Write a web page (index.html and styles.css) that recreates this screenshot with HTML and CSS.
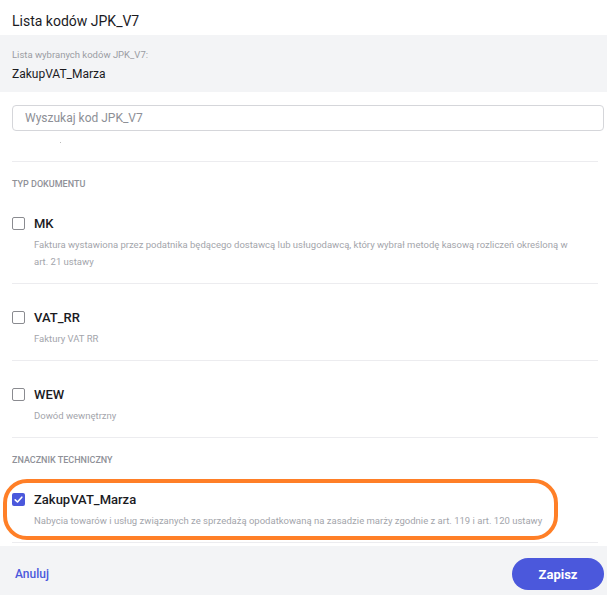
FILE: index.html
```html
<!DOCTYPE html>
<html lang="pl">

<head>
    <meta charset="UTF-8">
    <meta name="viewport" content="width=device-width, initial-scale=1.0">
    <title>Lista kodów JPK_V7</title>
    <link rel="stylesheet" href="styles.css">
</head>

<body>
    <div class="dialog">
        <div class="dialog-header">Lista kodów JPK_V7</div>

        <div class="selected">
            <div class="selected-label">Lista wybranych kodów JPK_V7:</div>
            <div class="selected-value">ZakupVAT_Marza</div>
        </div>

        <div class="content">
            <input class="search" type="text" placeholder="Wyszukaj kod JPK_V7">
            <div class="spacer"><span class="dot"></span></div>

            <div class="group">
                <div class="group-title">Typ dokumentu</div>

                <div class="item">
                    <div class="item-head">
                        <span class="checkbox"></span>
                        <span class="item-title">MK</span>
                    </div>
                    <p class="item-desc">Faktura wystawiona przez podatnika będącego dostawcą lub usługodawcą, który wybrał metodę kasową rozliczeń określoną w art. 21 ustawy</p>
                </div>

                <div class="item">
                    <div class="item-head">
                        <span class="checkbox"></span>
                        <span class="item-title">VAT_RR</span>
                    </div>
                    <p class="item-desc">Faktury VAT RR</p>
                </div>

                <div class="item">
                    <div class="item-head">
                        <span class="checkbox"></span>
                        <span class="item-title">WEW</span>
                    </div>
                    <p class="item-desc">Dowód wewnętrzny</p>
                </div>
            </div>

            <div class="group">
                <div class="group-title">Znacznik techniczny</div>

                <div class="item item-marked">
                    <div class="item-head">
                        <span class="checkbox checked">
                            <svg width="13" height="13" viewBox="0 0 13 13">
                                <path d="M3.2 6.8 L5.5 9 L9.8 4.2" fill="none" stroke="#fff" stroke-width="1.6" stroke-linecap="round" stroke-linejoin="round"/>
                            </svg>
                        </span>
                        <span class="item-title">ZakupVAT_Marza</span>
                    </div>
                    <p class="item-desc">Nabycia towarów i usług związanych ze sprzedażą opodatkowaną na zasadzie marży zgodnie z art. 119 i art. 120 ustawy</p>
                    <div class="highlight"></div>
                </div>
            </div>
        </div>

        <div class="dialog-footer">
            <a class="cancel" href="#">Anuluj</a>
            <button class="save">Zapisz</button>
        </div>
    </div>
</body>

</html>
```

FILE: styles.css
```css
body {
    margin: 0;
    font-family: 'Roboto', 'Liberation Sans', sans-serif;
    background: #fff;
    color: #1b1b1f;
}

.dialog {
    width: 607px;
}

.dialog-header {
    height: 35px;
    padding: 0 12px;
    font-size: 14px;
    line-height: 43px;
    box-sizing: border-box;
}

.selected {
    background: #f3f4f6;
    height: 57px;
    padding: 13px 12px 0;
    box-sizing: border-box;
}

.selected-label {
    font-size: 9.5px;
    line-height: 14px;
    color: #9a9ca3;
}

.selected-value {
    margin-top: 4px;
    font-size: 12px;
    line-height: 16px;
}

.content {
    padding: 13px 3px 0 12px;
}

.search {
    display: block;
    width: 100%;
    height: 26px;
    box-sizing: border-box;
    border: 1px solid #d5d6da;
    border-radius: 4px;
    padding: 0 12px;
    font-family: inherit;
    font-size: 12px;
    outline: none;
}

.search::placeholder {
    color: #8d8f96;
}

.spacer {
    height: 30px;
    position: relative;
    margin-right: 6px;
    border-bottom: 1px solid #ececef;
}

.dot {
    position: absolute;
    left: 48px;
    top: 11px;
    width: 1px;
    height: 1px;
    background: #bbb;
}

.group {
    margin-right: 6px;
}

.group-title {
    padding-top: 16px;
    font-size: 9px;
    line-height: 12px;
    font-weight: 500;
    text-transform: uppercase;
    color: #8f9198;
}

.item {
    padding: 24px 0 13px;
    border-bottom: 1px solid #ececef;
    position: relative;
}

.item-head {
    display: flex;
    align-items: center;
    gap: 9px;
    height: 18px;
}

.checkbox {
    width: 13px;
    height: 13px;
    box-sizing: border-box;
    border: 1.5px solid #8a8b90;
    border-radius: 2px;
    display: flex;
    align-items: center;
    justify-content: center;
}

.checkbox.checked {
    border: none;
    background: #4b58dc;
}

.item-title {
    font-size: 13px;
    font-weight: 500;
}

.item-desc {
    margin: 4px 22px 0 22px;
    font-size: 9.5px;
    line-height: 17px;
    color: #a3a5ab;
}

.highlight {
    position: absolute;
    left: -9px;
    top: 13px;
    width: 555px;
    height: 61px;
    box-sizing: border-box;
    border: 4px solid #ff7f27;
    border-radius: 24px;
}

.dialog-footer {
    margin-top: 3px;
    background: #f3f4f6;
    padding: 12px 3px 12px 15px;
    display: flex;
    justify-content: space-between;
    align-items: center;
}

.cancel {
    color: #4b58dc;
    font-size: 12px;
    font-weight: 500;
    text-decoration: none;
}

.save {
    width: 92px;
    height: 32px;
    border: none;
    border-radius: 16px;
    background: #4b58dc;
    color: #fff;
    font-family: inherit;
    font-size: 13px;
    font-weight: 700;
}
```
